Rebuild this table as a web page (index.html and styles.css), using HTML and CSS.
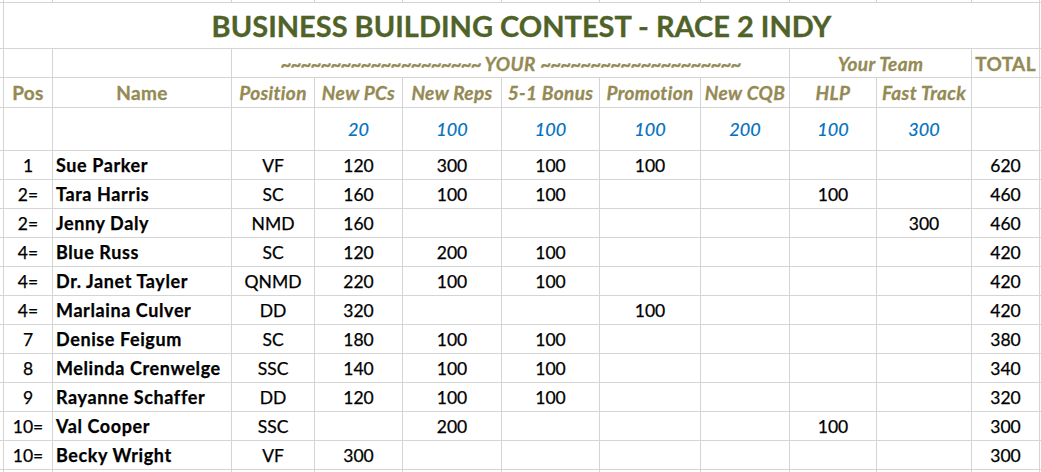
FILE: index.html
```html
<!DOCTYPE html>
<html lang="en">
<head>
<meta charset="utf-8">
<title>Business Building Contest - Race 2 Indy</title>
<link rel="stylesheet" href="styles.css">
</head>
<body>
<div class="sheet">
  <!-- top strip -->
  <div class="c"></div><div class="c"></div><div class="c"></div><div class="c"></div><div class="c"></div><div class="c"></div><div class="c"></div><div class="c"></div><div class="c"></div><div class="c"></div><div class="c"></div><div class="c"></div><div class="c"></div>

  <!-- title -->
  <div class="c"></div>
  <div class="c title span11">BUSINESS BUILDING CONTEST - RACE 2 INDY</div>
  <div class="c"></div>

  <!-- group header -->
  <div class="c"></div><div class="c"></div><div class="c"></div>
  <div class="c hd it span6"><span class="tilde">~~~~~~~~~~~~~~~~~~~~</span>&nbsp;YOUR&nbsp;<span class="tilde">~~~~~~~~~~~~~~~~~~~~</span></div>
  <div class="c hd it span2">Your Team</div>
  <div class="c hd">TOTAL</div>
  <div class="c"></div>

  <!-- column header -->
  <div class="c"></div>
  <div class="c hd">Pos</div>
  <div class="c hd">Name</div>
  <div class="c hd it">Position</div>
  <div class="c hd it">New PCs</div>
  <div class="c hd it">New Reps</div>
  <div class="c hd it">5-1 Bonus</div>
  <div class="c hd it">Promotion</div>
  <div class="c hd it">New CQB</div>
  <div class="c hd it">HLP</div>
  <div class="c hd it">Fast Track</div>
  <div class="c"></div>
  <div class="c"></div>

  <!-- points row -->
  <div class="c"></div><div class="c"></div><div class="c"></div><div class="c"></div>
  <div class="c pts">20</div>
  <div class="c pts">100</div>
  <div class="c pts">100</div>
  <div class="c pts">100</div>
  <div class="c pts">200</div>
  <div class="c pts">100</div>
  <div class="c pts">300</div>
  <div class="c"></div><div class="c"></div>

  <!-- data rows -->
  <div class="c"></div><div class="c d">1</div><div class="c d nm">Sue Parker</div><div class="c d">VF</div><div class="c d">120</div><div class="c d">300</div><div class="c d">100</div><div class="c d">100</div><div class="c d"></div><div class="c d"></div><div class="c d"></div><div class="c d">620</div><div class="c"></div>
  <div class="c"></div><div class="c d">2=</div><div class="c d nm">Tara Harris</div><div class="c d">SC</div><div class="c d">160</div><div class="c d">100</div><div class="c d">100</div><div class="c d"></div><div class="c d"></div><div class="c d">100</div><div class="c d"></div><div class="c d">460</div><div class="c"></div>
  <div class="c"></div><div class="c d">2=</div><div class="c d nm">Jenny Daly</div><div class="c d">NMD</div><div class="c d">160</div><div class="c d"></div><div class="c d"></div><div class="c d"></div><div class="c d"></div><div class="c d"></div><div class="c d">300</div><div class="c d">460</div><div class="c"></div>
  <div class="c"></div><div class="c d">4=</div><div class="c d nm">Blue Russ</div><div class="c d">SC</div><div class="c d">120</div><div class="c d">200</div><div class="c d">100</div><div class="c d"></div><div class="c d"></div><div class="c d"></div><div class="c d"></div><div class="c d">420</div><div class="c"></div>
  <div class="c"></div><div class="c d">4=</div><div class="c d nm">Dr. Janet Tayler</div><div class="c d">QNMD</div><div class="c d">220</div><div class="c d">100</div><div class="c d">100</div><div class="c d"></div><div class="c d"></div><div class="c d"></div><div class="c d"></div><div class="c d">420</div><div class="c"></div>
  <div class="c"></div><div class="c d">4=</div><div class="c d nm">Marlaina Culver</div><div class="c d">DD</div><div class="c d">320</div><div class="c d"></div><div class="c d"></div><div class="c d">100</div><div class="c d"></div><div class="c d"></div><div class="c d"></div><div class="c d">420</div><div class="c"></div>
  <div class="c"></div><div class="c d">7</div><div class="c d nm">Denise Feigum</div><div class="c d">SC</div><div class="c d">180</div><div class="c d">100</div><div class="c d">100</div><div class="c d"></div><div class="c d"></div><div class="c d"></div><div class="c d"></div><div class="c d">380</div><div class="c"></div>
  <div class="c"></div><div class="c d">8</div><div class="c d nm">Melinda Crenwelge</div><div class="c d">SSC</div><div class="c d">140</div><div class="c d">100</div><div class="c d">100</div><div class="c d"></div><div class="c d"></div><div class="c d"></div><div class="c d"></div><div class="c d">340</div><div class="c"></div>
  <div class="c"></div><div class="c d">9</div><div class="c d nm">Rayanne Schaffer</div><div class="c d">DD</div><div class="c d">120</div><div class="c d">100</div><div class="c d">100</div><div class="c d"></div><div class="c d"></div><div class="c d"></div><div class="c d"></div><div class="c d">320</div><div class="c"></div>
  <div class="c"></div><div class="c d">10=</div><div class="c d nm">Val Cooper</div><div class="c d">SSC</div><div class="c d"></div><div class="c d">200</div><div class="c d"></div><div class="c d"></div><div class="c d"></div><div class="c d">100</div><div class="c d"></div><div class="c d">300</div><div class="c"></div>
  <div class="c"></div><div class="c d">10=</div><div class="c d nm">Becky Wright</div><div class="c d">VF</div><div class="c d">300</div><div class="c d"></div><div class="c d"></div><div class="c d"></div><div class="c d"></div><div class="c d"></div><div class="c d"></div><div class="c d">300</div><div class="c"></div>

  <!-- bottom strip -->
  <div class="c"></div><div class="c"></div><div class="c"></div><div class="c"></div><div class="c"></div><div class="c"></div><div class="c"></div><div class="c"></div><div class="c"></div><div class="c"></div><div class="c"></div><div class="c"></div><div class="c"></div>
</div>
</body>
</html>
```

FILE: styles.css
```css
html, body {
  margin: 0;
  padding: 0;
  background: #ffffff;
  overflow: hidden;
}

body {
  width: 1041px;
  height: 472px;
  font-family: Lato, "Liberation Sans", sans-serif;
}

.sheet {
  display: grid;
  grid-template-columns: 3px 48px 178px 82px 87px 98px 97px 100px 88px 86px 94px 67px 1px;
  grid-template-rows: 2px 45px 28px 29px 42px repeat(11, 28px) 2px;
  gap: 1px;
  background: #d4d4d4;
  width: 1041px;
  height: 472px;
}

.c {
  background: #ffffff;
  display: flex;
  align-items: center;
  justify-content: center;
  white-space: nowrap;
  overflow: visible;
  min-width: 0;
}

.span11 { grid-column: span 11; }
.span6 { grid-column: span 6; }
.span2 { grid-column: span 2; }

.title {
  font-size: 29px;
  font-weight: 700;
  color: #4f6228;
  -webkit-text-stroke: 0.3px #4f6228;
}

.hd {
  font-size: 19px;
  font-weight: 700;
  letter-spacing: 0.35px;
  color: #948a54;
  -webkit-text-stroke: 0.3px #948a54;
}

.it {
  font-style: italic;
}

.tilde {
  letter-spacing: -1px;
}

.pts {
  font-size: 18px;
  font-style: italic;
  color: #0070c0;
  -webkit-text-stroke: 0.2px #0070c0;
}

.d {
  font-size: 17.5px;
  color: #000000;
  -webkit-text-stroke: 0.25px #000000;
}

.nm {
  justify-content: flex-start;
  padding-left: 3px;
  font-size: 18px;
  font-weight: 700;
  letter-spacing: 0.6px;
}
```
